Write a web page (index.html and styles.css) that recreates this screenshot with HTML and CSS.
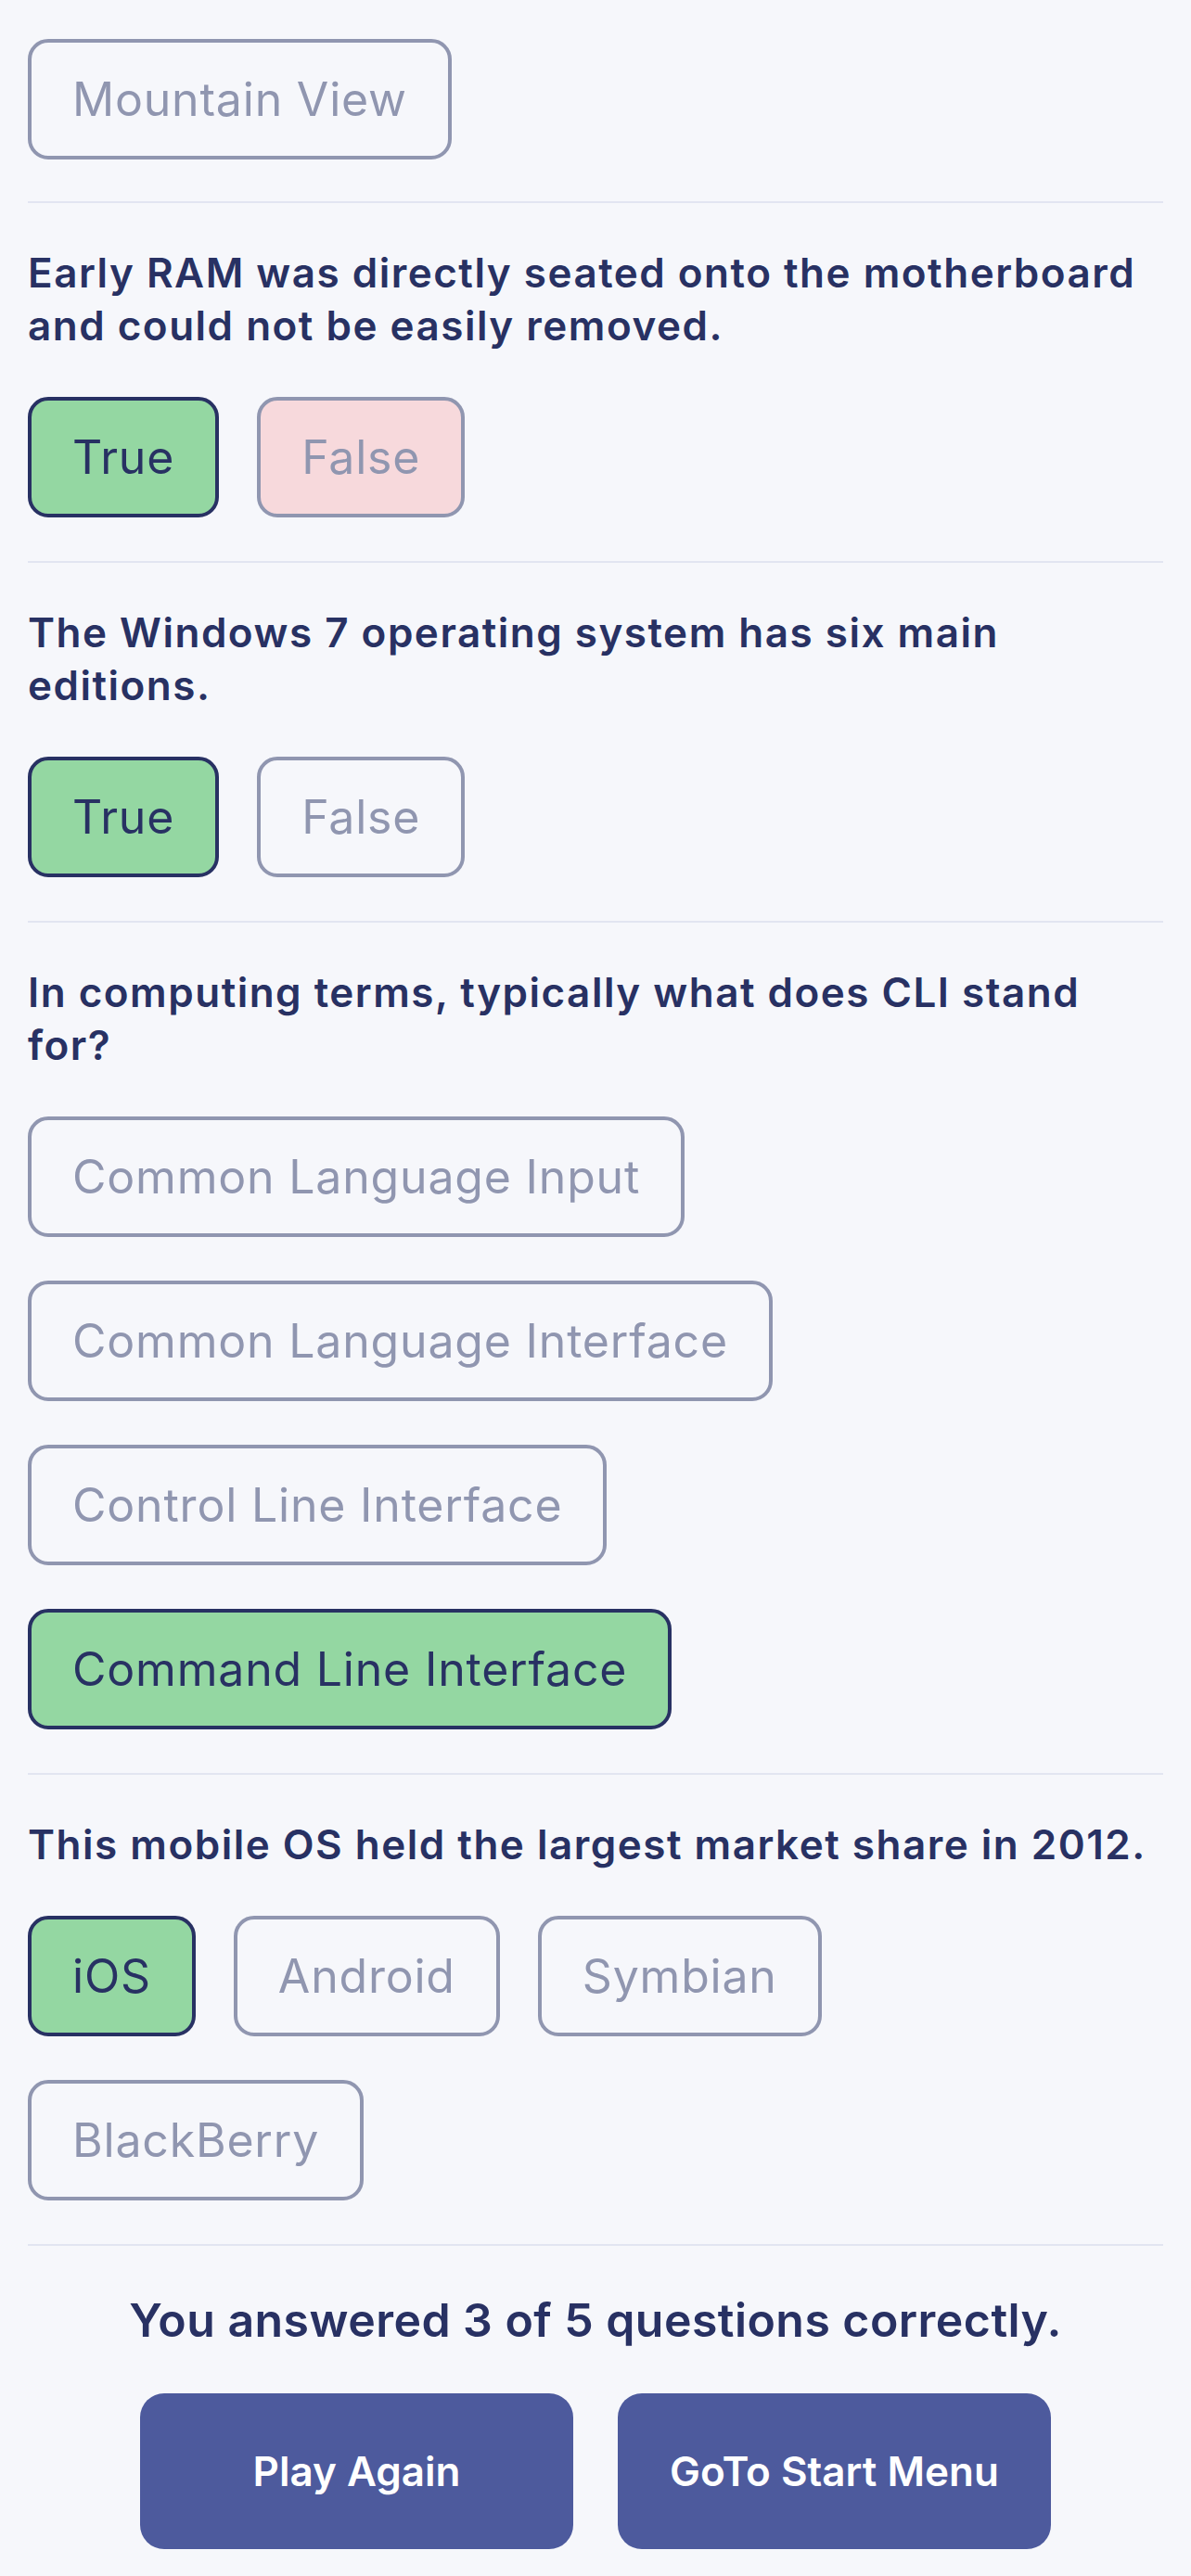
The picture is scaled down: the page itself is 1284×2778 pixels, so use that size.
FILE: index.html
```html
<!DOCTYPE html>
<html lang="en">
<head>
<meta charset="utf-8">
<title>Quiz Results</title>
<link rel="stylesheet" href="styles.css">
</head>
<body>
<main class="quiz">
  <section class="question question-partial">
    <div class="answers">
      <button class="answer">Mountain View</button>
    </div>
  </section>

  <section class="question">
    <h2 class="q-text">Early RAM was directly seated onto the motherboard and could not be easily removed.</h2>
    <div class="answers">
      <button class="answer correct">True</button>
      <button class="answer wrong">False</button>
    </div>
  </section>

  <section class="question">
    <h2 class="q-text">The Windows 7 operating system has six main editions.</h2>
    <div class="answers">
      <button class="answer correct">True</button>
      <button class="answer">False</button>
    </div>
  </section>

  <section class="question">
    <h2 class="q-text">In computing terms, typically what does CLI stand for?</h2>
    <div class="answers">
      <button class="answer">Common Language Input</button>
      <button class="answer">Common Language Interface</button>
      <button class="answer">Control Line Interface</button>
      <button class="answer correct">Command Line Interface</button>
    </div>
  </section>

  <section class="question">
    <h2 class="q-text">This mobile OS held the largest market share in 2012.</h2>
    <div class="answers">
      <button class="answer correct">iOS</button>
      <button class="answer">Android</button>
      <button class="answer">Symbian</button>
      <button class="answer">BlackBerry</button>
    </div>
  </section>

  <footer class="result">
    <p class="score">You answered 3 of 5 questions correctly.</p>
    <div class="actions">
      <button class="action">Play Again</button>
      <button class="action">GoTo Start Menu</button>
    </div>
  </footer>
</main>
</body>
</html>
```

FILE: styles.css
```css
* {
  box-sizing: border-box;
}

html, body {
  margin: 0;
  padding: 0;
  background: #f6f7fb;
}

body {
  font-family: Inter, "Noto Sans", sans-serif;
  color: #283163;
}

.quiz {
  padding: 0 30px;
}

.question {
  padding: 47px 0 47px;
  border-bottom: 2px solid #e2e5f1;
}

.question-partial {
  padding-top: 42px;
  padding-bottom: 45px;
}

.q-text {
  margin: 0 0 48px;
  font-size: 44px;
  line-height: 57px;
  font-weight: 600;
  letter-spacing: 1.5px;
  color: #283163;
}

.answers {
  display: flex;
  flex-wrap: wrap;
  column-gap: 41px;
  row-gap: 47px;
}

.answer {
  font-family: Inter, "Noto Sans", sans-serif;
  font-size: 50px;
  line-height: 60px;
  font-weight: 400;
  letter-spacing: 0.8px;
  padding: 31px 44px;
  border: 4px solid #9096b0;
  border-radius: 22px;
  background: transparent;
  color: #9096b0;
  margin: 0;
  cursor: pointer;
}

.answer.correct {
  background: #94d7a2;
  border-color: #283163;
  color: #283163;
}

.answer.wrong {
  background: #f7d9dc;
}

.result {
  padding: 50px 0 30px;
}

.score {
  margin: 0 0 49px;
  text-align: center;
  font-size: 50px;
  line-height: 60px;
  font-weight: 600;
  letter-spacing: 0.45px;
  color: #283163;
}

.actions {
  display: flex;
  justify-content: center;
  gap: 48px;
}

.action {
  width: 467px;
  height: 168px;
  border: none;
  border-radius: 26px;
  background: #4d5a9d;
  color: #ffffff;
  font-family: Inter, "Noto Sans", sans-serif;
  font-size: 44px;
  font-weight: 600;
  margin: 0;
  cursor: pointer;
}
```
